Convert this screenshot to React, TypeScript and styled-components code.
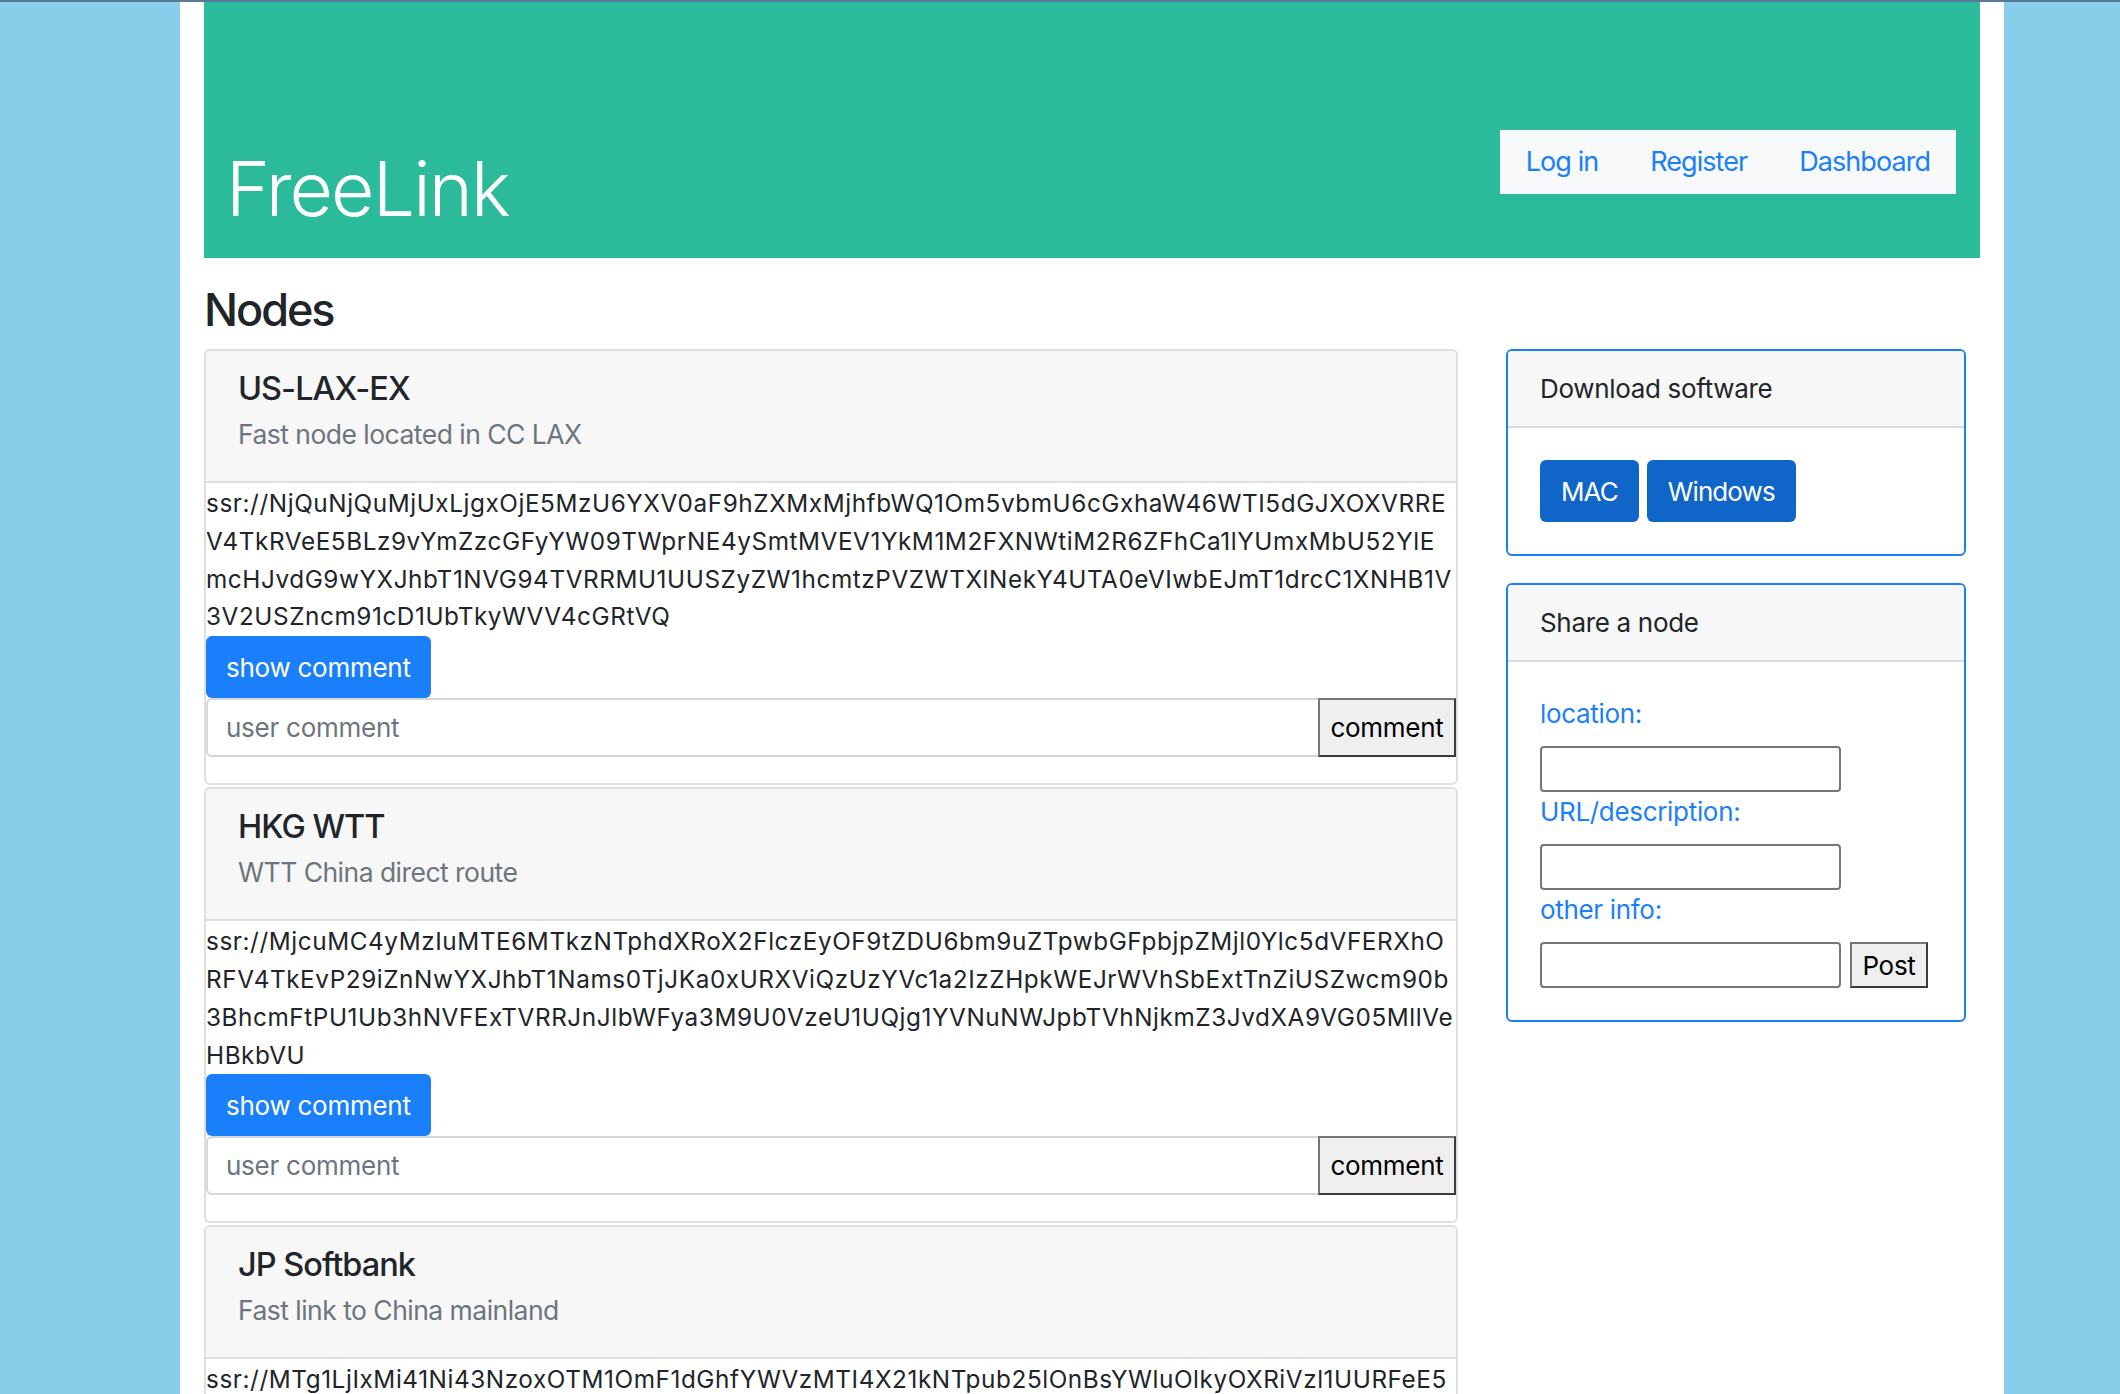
import React from "react";
import styled, { createGlobalStyle } from "styled-components";

const GlobalStyle = createGlobalStyle`
  html, body { margin: 0; padding: 0; }
  body {
    background: #87ceeb;
    border-top: 2px solid #5a7896;
    font-family: Inter, "Liberation Sans", Arial, sans-serif;
    letter-spacing: -0.02em;
    color: #212529;
  }
  *, *::before, *::after { box-sizing: border-box; }
`;

const Page = styled.div`
  margin-left: 180px;
  width: 1824px;
  min-height: calc(100vh - 2px);
  background: #fff;
  padding: 0 24px 40px;
`;

const Header = styled.header`
  display: flex;
  justify-content: space-between;
  align-items: flex-start;
  height: 256px;
  background: #2bbb9b;
  padding: 0 24px 0 22px;
`;

const Brand = styled.h1`
  align-self: flex-end;
  margin: 0 0 24px;
  font-size: 75px;
  font-weight: 300;
  line-height: 90px;
  letter-spacing: -0.025em;
  color: #fff;
`;

const Nav = styled.nav`
  display: flex;
  margin-top: 128px;
  background: #f8f9fa;
`;

const NavLink = styled.a`
  padding: 12px 26px;
  font-size: 27px;
  line-height: 40px;
  letter-spacing: -0.035em;
  color: #1a7ffb;
  text-decoration: none;
`;

const SectionTitle = styled.h2`
  margin: 25px 0 12px;
  font-size: 45px;
  font-weight: 500;
  line-height: 54px;
  letter-spacing: -0.045em;
`;

const Layout = styled.div`
  display: grid;
  grid-template-columns: 1254px 460px;
  column-gap: 48px;
  align-items: start;
`;

const NodeList = styled.div`
  display: flex;
  flex-direction: column;
  gap: 2px;
`;

const NodeCard = styled.section`
  border: 2px solid #dfdfdf;
  border-radius: 6px;
  overflow: hidden;
  background: #fff;
`;

const NodeHeader = styled.div`
  background: #f7f7f7;
  border-bottom: 2px solid #dfdfdf;
  padding: 18px 32px 27px;
`;

const NodeName = styled.h4`
  margin: 0 0 6px;
  font-size: 32.5px;
  font-weight: 500;
  line-height: 39px;
  letter-spacing: -0.03em;
`;

const NodeDesc = styled.p`
  margin: 0;
  font-size: 26.5px;
  line-height: 40px;
  letter-spacing: -0.02em;
  color: #6c757d;
`;

const NodeBody = styled.div`
  padding: 2px 0 26px;
`;

const SsrText = styled.p`
  margin: 0;
  font-size: 24.3px;
  line-height: 37.8px;
  letter-spacing: 0.58px;
  color: #212529;
`;

const SsrLine = styled.span`
  display: block;
  white-space: nowrap;
`;

const ShowButton = styled.button`
  display: block;
  height: 62px;
  padding: 0 20px;
  border: none;
  border-radius: 6px;
  background: #1a7ffb;
  color: #fff;
  font-family: inherit;
  font-size: 26px;
  letter-spacing: -0.01em;
`;

const CommentGroup = styled.div`
  display: flex;
  height: 59px;
`;

const CommentInput = styled.input`
  flex: 1;
  min-width: 0;
  border: 2px solid #d3d7db;
  border-right: none;
  border-radius: 6px 0 0 6px;
  padding: 0 18px;
  font-family: inherit;
  font-size: 26px;
  letter-spacing: -0.01em;
  color: #495057;
  &::placeholder { color: #6c757d; }
`;

const PlainButton = styled.button<{ $w: number }>`
  width: ${(p) => p.$w}px;
  padding: 0;
  background: #efefef;
  border: 2px solid;
  border-color: #767676 #3b3b3b #3b3b3b #767676;
  font-family: inherit;
  font-size: 26px;
  letter-spacing: -0.01em;
  color: #000;
`;

const Sidebar = styled.aside`
  display: flex;
  flex-direction: column;
  gap: 27px;
`;

const SideCard = styled.section`
  border: 2px solid #1a7ffb;
  border-radius: 6px;
  overflow: hidden;
`;

const SideHeader = styled.div`
  background: #f7f7f7;
  border-bottom: 2px solid #dcdcdc;
  padding: 18px 32px;
  font-size: 26px;
  line-height: 39px;
`;

const SideBody = styled.div`
  padding: 32px;
`;

const ButtonRow = styled.div`
  display: flex;
  gap: 8px;
`;

const DownloadButton = styled.a`
  display: flex;
  align-items: center;
  height: 62px;
  padding: 0 21px;
  border-radius: 6px;
  background: #1066c8;
  color: #fff;
  font-size: 26px;
  letter-spacing: -0.035em;
  text-decoration: none;
`;

const FieldLabel = styled.label`
  display: block;
  font-size: 26px;
  line-height: 39px;
  color: #1a7ffb;
`;

const FieldRow = styled.div`
  display: flex;
  gap: 9px;
  margin-top: 13px;
  height: 46px;
`;

const TextField = styled.input`
  width: 301px;
  height: 46px;
  border: 2px solid #767676;
  border-radius: 4px;
  background: #fff;
`;

type NodeItem = { name: string; desc: string; lines: string[] };

const nodes: NodeItem[] = [
  {
    name: "US-LAX-EX",
    desc: "Fast node located in CC LAX",
    lines: [
      "ssr://NjQuNjQuMjUxLjgxOjE5MzU6YXV0aF9hZXMxMjhfbWQ1Om5vbmU6cGxhaW46WTI5dGJXOXVRRE",
      "V4TkRVeE5BLz9vYmZzcGFyYW09TWprNE4ySmtMVEV1YkM1M2FXNWtiM2R6ZFhCa1lYUmxMbU52YlE",
      "mcHJvdG9wYXJhbT1NVG94TVRRMU1UUSZyZW1hcmtzPVZWTXlNekY4UTA0eVIwbEJmT1drcC1XNHB1V",
      "3V2USZncm91cD1UbTkyWVV4cGRtVQ",
    ],
  },
  {
    name: "HKG WTT",
    desc: "WTT China direct route",
    lines: [
      "ssr://MjcuMC4yMzIuMTE6MTkzNTphdXRoX2FlczEyOF9tZDU6bm9uZTpwbGFpbjpZMjl0Ylc5dVFERXhO",
      "RFV4TkEvP29iZnNwYXJhbT1Nams0TjJKa0xURXViQzUzYVc1a2IzZHpkWEJrWVhSbExtTnZiUSZwcm90b",
      "3BhcmFtPU1Ub3hNVFExTVRRJnJlbWFya3M9U0VzeU1UQjg1YVNuNWJpbTVhNjkmZ3JvdXA9VG05MllVe",
      "HBkbVU",
    ],
  },
  {
    name: "JP Softbank",
    desc: "Fast link to China mainland",
    lines: [
      "ssr://MTg1LjIxMi41Ni43NzoxOTM1OmF1dGhfYWVzMTI4X21kNTpub25lOnBsYWluOlkyOXRiVzl1UURFeE5",
      "RFV4TkEvP29iZnNwYXJhbT1Nams0TjJKa0xURXViQzUzYVc1a2IzZHpkWEJrWVhSbExtTnZiUSZwcm90b",
      "3BhcmFtPU1Ub3hNVFExTVRRJnJlbWFya3M9U2xBdFUyOW1kR0poYm1zJmdyb3VwPVRtOTJZVXhwZG1V",
    ],
  },
];

function NodeEntry({ node }: { node: NodeItem }) {
  return (
    <NodeCard>
      <NodeHeader>
        <NodeName>{node.name}</NodeName>
        <NodeDesc>{node.desc}</NodeDesc>
      </NodeHeader>
      <NodeBody>
        <SsrText>
          {node.lines.map((l, i) => (
            <SsrLine key={i}>{l}</SsrLine>
          ))}
        </SsrText>
        <ShowButton type="button">show comment</ShowButton>
        <CommentGroup>
          <CommentInput placeholder="user comment" />
          <PlainButton $w={138} type="button">comment</PlainButton>
        </CommentGroup>
      </NodeBody>
    </NodeCard>
  );
}

export default function App() {
  return (
    <>
      <GlobalStyle />
      <Page>
        <Header>
          <Brand>FreeLink</Brand>
          <Nav>
            <NavLink href="#">Log in</NavLink>
            <NavLink href="#">Register</NavLink>
            <NavLink href="#">Dashboard</NavLink>
          </Nav>
        </Header>
        <SectionTitle>Nodes</SectionTitle>
        <Layout>
          <NodeList>
            {nodes.map((n) => (
              <NodeEntry key={n.name} node={n} />
            ))}
          </NodeList>
          <Sidebar>
            <SideCard>
              <SideHeader>Download software</SideHeader>
              <SideBody>
                <ButtonRow>
                  <DownloadButton href="#">MAC</DownloadButton>
                  <DownloadButton href="#">Windows</DownloadButton>
                </ButtonRow>
              </SideBody>
            </SideCard>
            <SideCard>
              <SideHeader>Share a node</SideHeader>
              <SideBody>
                <FieldLabel>location:</FieldLabel>
                <FieldRow>
                  <TextField />
                </FieldRow>
                <FieldLabel>URL/description:</FieldLabel>
                <FieldRow>
                  <TextField />
                </FieldRow>
                <FieldLabel>other info:</FieldLabel>
                <FieldRow>
                  <TextField />
                  <PlainButton $w={78} type="button">Post</PlainButton>
                </FieldRow>
              </SideBody>
            </SideCard>
          </Sidebar>
        </Layout>
      </Page>
    </>
  );
}
